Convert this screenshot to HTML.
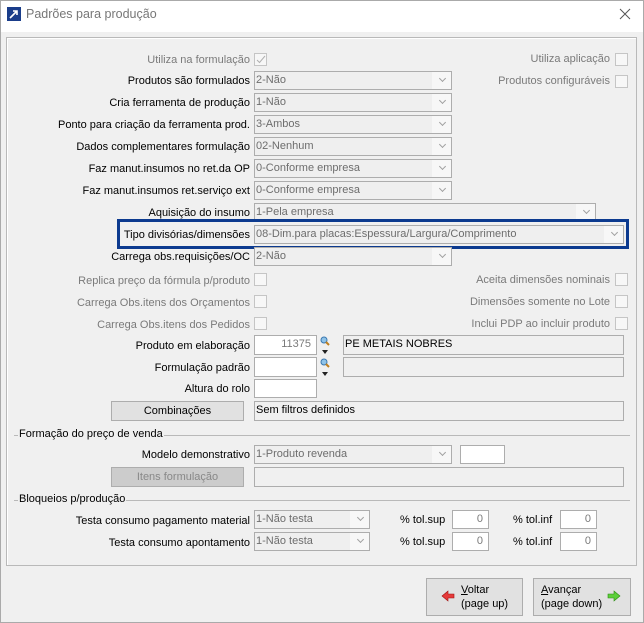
<!DOCTYPE html>
<html><head><meta charset="utf-8"><style>
*{box-sizing:border-box;margin:0;padding:0}
body{width:644px;height:623px;background:#f0f0f0;font-family:"Liberation Sans",sans-serif;font-size:11px;color:#000;position:relative;overflow:hidden}
.a{position:absolute;white-space:nowrap}
.l{position:absolute;right:394px;white-space:nowrap;line-height:14px}
.g{color:#7a7a7a}
.cb{position:absolute;height:19px;border:1px solid #adadad;background:#efefef;color:#6d6d6d;padding-left:1px;line-height:16px;overflow:hidden;white-space:nowrap}
.cb:after{content:"";position:absolute;right:0;top:0;width:19px;height:17px;background:#f7f7f7}
.cb i{position:absolute;right:6px;top:4px;width:5px;height:5px;border-right:1px solid #a0a0a0;border-bottom:1px solid #a0a0a0;transform:rotate(45deg);z-index:1}
.ck{position:absolute;width:13px;height:13px;border:1px solid #c5c5c5;background:#f7f7f7}
.in{position:absolute;height:19px;border:1px solid #adadad;background:#fff;text-align:right;padding-right:5px;line-height:17px;color:#7a7a7a}
.fd{position:absolute;height:20px;border:1px solid #adadad;background:#f0f0f0;line-height:17px;padding-left:1px}
.bt{position:absolute;height:20px;border:1px solid #adadad;background:#e1e1e1;text-align:center;line-height:18px}
</style></head><body>
<div class="a" style="left:0;top:0;width:644px;height:32px;background:#fff;border:1px solid #aaa;border-bottom:none"></div>
<div class="a" style="left:0;top:0;width:644px;height:623px;border:1px solid #aaa"></div>
<svg class="a" style="left:7px;top:7px" width="14" height="14"><rect width="14" height="14" fill="#1a3d8a"/><path d="M3 11L10 4M6 4h4v4" stroke="#fff" stroke-width="1.6" fill="none"/></svg>
<div class="a" style="left:26px;top:7px;font-size:12.5px;color:#777">Padrões para produção</div>
<svg class="a" style="left:619px;top:8px" width="12" height="12"><path d="M1 1L11 11M11 1L1 11" stroke="#555" stroke-width="1"/></svg>
<div class="a" style="left:6px;top:37px;width:631px;height:529px;border:1px solid #b9b9b9;box-shadow:inset 1px 1px 0 #fff"></div>

<div class="l g" style="top:53px">Utiliza na formulação</div>
<div class="ck" style="left:254px;top:53px"><svg width="11" height="11" style="position:absolute;left:0;top:0"><path d="M2 6l2.5 2.5L10 2" stroke="#b0b0b0" fill="none"/></svg></div>
<div class="a g" style="right:34px;top:53px">Utiliza aplicação</div><div class="ck" style="left:615px;top:53px"></div>
<div class="a g" style="right:34px;top:75px">Produtos configuráveis</div><div class="ck" style="left:615px;top:75px"></div>

<div class="l" style="top:74px">Produtos são formulados</div><div class="cb" style="left:254px;top:71px;width:198px">2-Não<i></i></div>
<div class="l" style="top:96px">Cria ferramenta de produção</div><div class="cb" style="left:254px;top:93px;width:198px">1-Não<i></i></div>
<div class="l" style="top:118px">Ponto para criação da ferramenta prod.</div><div class="cb" style="left:254px;top:115px;width:198px">3-Ambos<i></i></div>
<div class="l" style="top:140px">Dados complementares formulação</div><div class="cb" style="left:254px;top:137px;width:198px">02-Nenhum<i></i></div>
<div class="l" style="top:162px">Faz manut.insumos no ret.da OP</div><div class="cb" style="left:254px;top:159px;width:198px">0-Conforme empresa<i></i></div>
<div class="l" style="top:184px">Faz manut.insumos ret.serviço ext</div><div class="cb" style="left:254px;top:181px;width:198px">0-Conforme empresa<i></i></div>
<div class="l" style="top:206px">Aquisição do insumo</div><div class="cb" style="left:254px;top:203px;width:342px">1-Pela empresa<i></i></div>
<div class="l" style="top:228px">Tipo divisórias/dimensões</div><div class="cb" style="left:254px;top:225px;width:370px">08-Dim.para placas:Espessura/Largura/Comprimento<i></i></div>
<div class="a" style="left:117px;top:219px;width:512px;height:30px;border:3px solid #0c3a8f"></div>
<div class="l" style="top:250px">Carrega obs.requisições/OC</div><div class="cb" style="left:254px;top:247px;width:198px">2-Não<i></i></div>

<div class="l g" style="top:274px">Replica preço da fórmula p/produto</div><div class="ck" style="left:254px;top:273px"></div>
<div class="l g" style="top:296px">Carrega Obs.itens dos Orçamentos</div><div class="ck" style="left:254px;top:295px"></div>
<div class="l g" style="top:318px">Carrega Obs.itens dos Pedidos</div><div class="ck" style="left:254px;top:317px"></div>
<div class="a g" style="right:34px;top:274px">Aceita dimensões nominais</div><div class="ck" style="left:615px;top:273px"></div>
<div class="a g" style="right:34px;top:296px">Dimensões somente no Lote</div><div class="ck" style="left:615px;top:295px"></div>
<div class="a g" style="right:34px;top:318px">Inclui PDP ao incluir produto</div><div class="ck" style="left:615px;top:317px"></div>

<div class="l" style="top:339px">Produto em elaboração</div><div class="in" style="left:254px;top:335px;width:63px;height:20px">11375</div>
<div class="fd" style="left:343px;top:335px;width:281px">PE METAIS NOBRES</div>
<div class="l" style="top:361px">Formulação padrão</div><div class="in" style="left:254px;top:357px;width:63px;height:20px"></div>
<div class="fd" style="left:343px;top:357px;width:281px"></div>
<svg class="a" style="left:320px;top:336px" width="10" height="40"><circle cx="4" cy="4" r="3" fill="#8fc3e8" stroke="#3a78b0"/><path d="M6 6l3 3" stroke="#c08020" stroke-width="2"/><path d="M2 14h6l-3 4z" fill="#222"/><circle cx="4" cy="26" r="3" fill="#8fc3e8" stroke="#3a78b0"/><path d="M6 28l3 3" stroke="#c08020" stroke-width="2"/><path d="M2 36h6l-3 4z" fill="#222"/></svg>
<div class="l" style="top:382px">Altura do rolo</div><div class="in" style="left:254px;top:379px;width:63px"></div>
<div class="bt" style="left:111px;top:401px;width:133px">Combinações</div>
<div class="fd" style="left:254px;top:401px;width:370px">Sem filtros definidos</div>

<div class="a" style="left:14px;top:435px;width:616px;border-top:1px solid #b9b9b9"></div>
<div class="a" style="left:18px;top:428px;background:#f0f0f0;padding:0 1px">Formação do preço de venda</div>
<div class="l" style="top:448px">Modelo demonstrativo</div><div class="cb" style="left:254px;top:445px;width:198px">1-Produto revenda<i></i></div>
<div class="in" style="left:460px;top:445px;width:45px"></div>
<div class="bt" style="left:111px;top:467px;width:133px;background:#cccccc;color:#888">Itens formulação</div>
<div class="fd" style="left:254px;top:467px;width:370px"></div>

<div class="a" style="left:14px;top:500px;width:616px;border-top:1px solid #b9b9b9"></div>
<div class="a" style="left:18px;top:493px;background:#f0f0f0;padding:0 1px">Bloqueios p/produção</div>
<div class="l" style="top:514px">Testa consumo pagamento material</div><div class="cb" style="left:254px;top:510px;width:116px">1-Não testa<i></i></div>
<div class="a" style="left:400px;top:514px">% tol.sup</div><div class="in" style="left:452px;top:510px;width:37px">0</div>
<div class="a" style="left:513px;top:514px">% tol.inf</div><div class="in" style="left:560px;top:510px;width:37px">0</div>
<div class="l" style="top:536px">Testa consumo apontamento</div><div class="cb" style="left:254px;top:532px;width:116px">1-Não testa<i></i></div>
<div class="a" style="left:400px;top:536px">% tol.sup</div><div class="in" style="left:452px;top:532px;width:37px">0</div>
<div class="a" style="left:513px;top:536px">% tol.inf</div><div class="in" style="left:560px;top:532px;width:37px">0</div>

<div class="a" style="left:426px;top:578px;width:97px;height:38px;border:1px solid #adadad;background:#e1e1e1"></div>
<svg class="a" style="left:441px;top:590px" width="14" height="12"><path d="M1 6l6-5v3h6v4H7v3z" fill="#e53a3a" stroke="#a01010" stroke-width=".6"/></svg>
<div class="a" style="left:461px;top:583px;line-height:14px"><u>V</u>oltar<br>(page up)</div>
<div class="a" style="left:533px;top:578px;width:98px;height:38px;border:1px solid #adadad;background:#e1e1e1"></div>
<div class="a" style="left:541px;top:583px;line-height:14px"><u>A</u>vançar<br>(page down)</div>
<svg class="a" style="left:607px;top:590px" width="14" height="12"><path d="M13 6L7 1v3H1v4h6v3z" fill="#5ccf3a" stroke="#2a8a10" stroke-width=".6"/></svg>
</body></html>
